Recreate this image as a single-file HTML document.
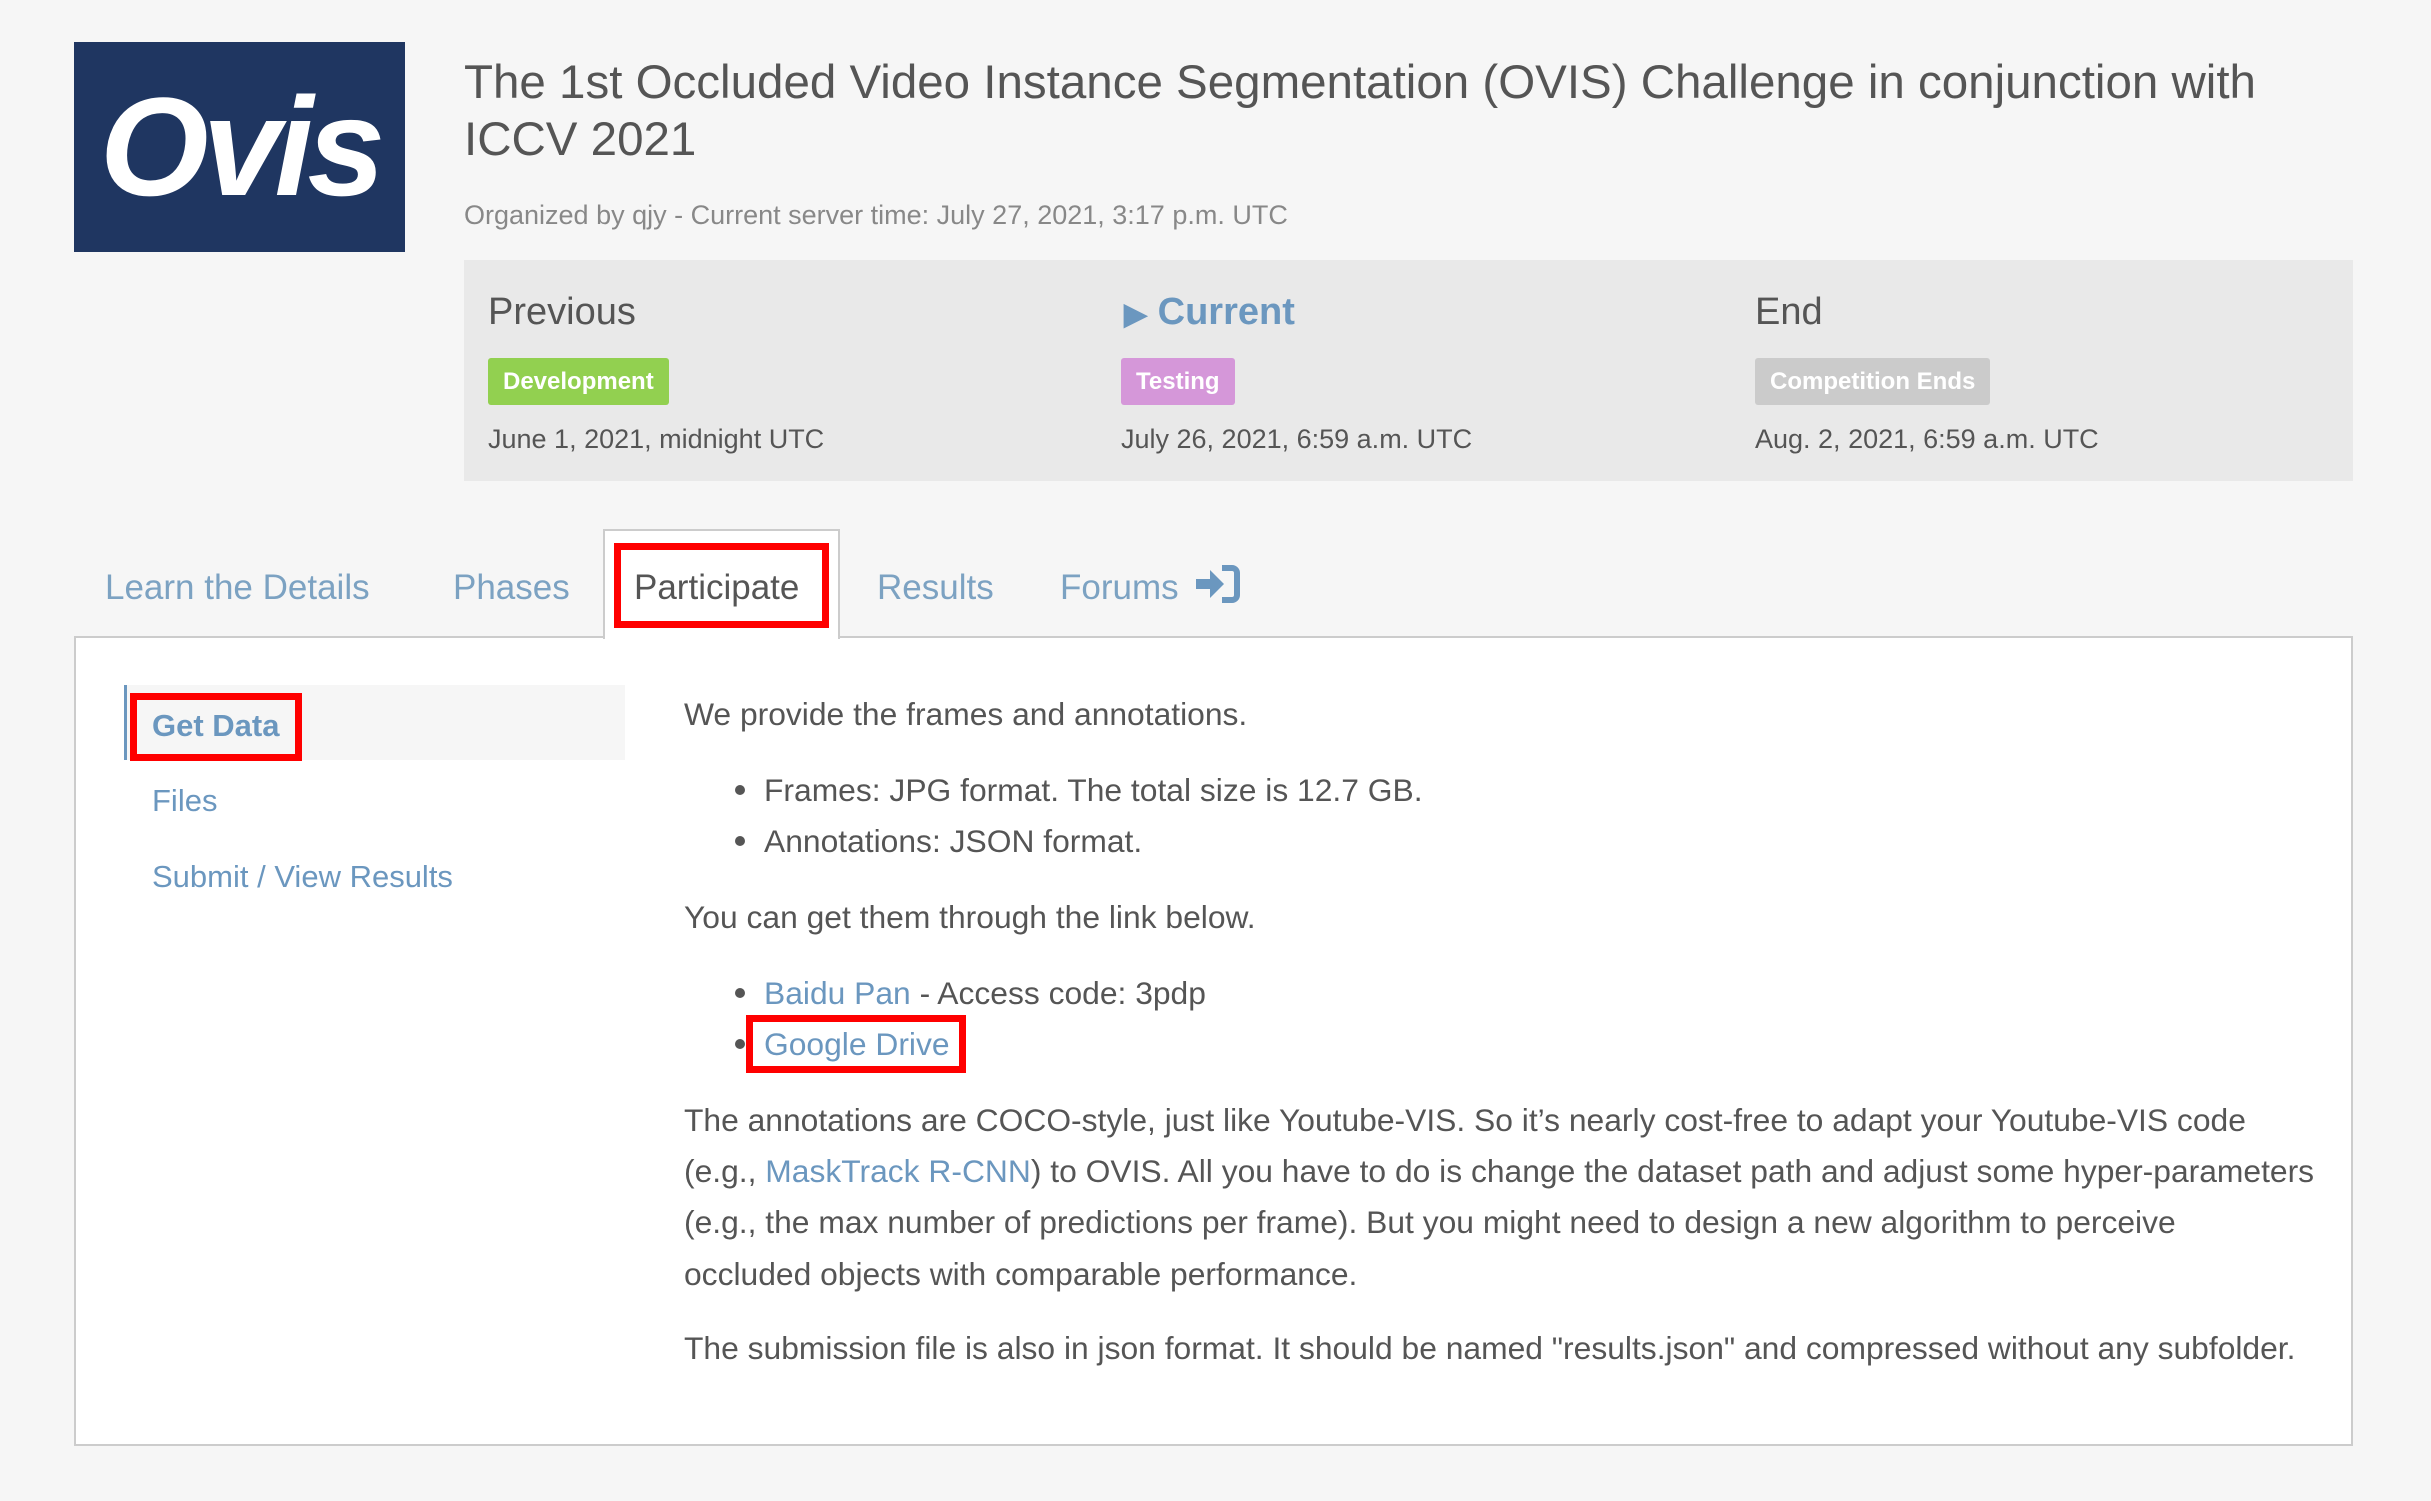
<!DOCTYPE html>
<html><head><meta charset="utf-8"><style>
*{margin:0;padding:0;box-sizing:border-box}
body{width:2431px;height:1501px;background:#f6f6f6;font-family:"Liberation Sans",sans-serif;position:relative;overflow:hidden;color:#555}
.a{position:absolute;white-space:nowrap}
.logo{left:74px;top:42px;width:331px;height:210px;background:#1f3661;color:#fff;font-style:italic;font-weight:bold;font-size:140px;line-height:210px;text-align:center;letter-spacing:-6px}
.title{left:464px;top:54px;font-size:47.5px;line-height:57px;color:#555}
.org{left:464px;top:200px;font-size:27px;color:#888}
.phase{left:464px;top:260px;width:1889px;height:221px;background:#e9e9e9}
.h{font-size:38px;color:#555;top:288px;line-height:48px}
.badge{top:358px;height:47px;line-height:47px;color:#fff;font-size:24px;font-weight:bold;padding:0 15px;border-radius:3px}
.date{top:423px;font-size:27px;color:#555;line-height:32px}
.tab{top:563px;font-size:35px;line-height:50px;color:#7ca2c2}
.panel{left:74px;top:636px;width:2279px;height:810px;background:#fff;border:2px solid #ccc}
.act{left:603px;top:529px;width:237px;height:110px;background:#fff;border:2px solid #ccc;border-bottom:none}
.red{border:7px solid #f00}
.side{font-size:31px;color:#6b97bf;line-height:40px}
.t{font-size:31.8px;line-height:40px;color:#555;left:684px}
.l{color:#6b97bf}
.dot{width:10px;height:10px;border-radius:5px;background:#555;left:735px}
</style></head><body>
<div class="a logo">Ovis</div>
<div class="a title">The 1st Occluded Video Instance Segmentation (OVIS) Challenge in conjunction with<br>ICCV 2021</div>
<div class="a org">Organized by qjy - Current server time: July 27, 2021, 3:17 p.m. UTC</div>
<div class="a phase"></div>
<div class="a h" style="left:488px">Previous</div>
<div class="a h" style="left:1124px;color:#6b97bf;font-weight:bold"><span style="font-size:30px">&#9654;</span> Current</div>
<div class="a h" style="left:1755px">End</div>
<div class="a badge" style="left:488px;background:#92d050">Development</div>
<div class="a badge" style="left:1121px;background:#d597d9">Testing</div>
<div class="a badge" style="left:1755px;background:#cbcbcb">Competition Ends</div>
<div class="a date" style="left:488px">June 1, 2021, midnight UTC</div>
<div class="a date" style="left:1121px">July 26, 2021, 6:59 a.m. UTC</div>
<div class="a date" style="left:1755px">Aug. 2, 2021, 6:59 a.m. UTC</div>
<div class="a panel"></div>
<div class="a act"></div>
<div class="a tab" style="left:105px">Learn the Details</div>
<div class="a tab" style="left:453px">Phases</div>
<div class="a tab" style="left:634px;color:#555">Participate</div>
<div class="a tab" style="left:877px">Results</div>
<div class="a tab" style="left:1060px">Forums</div>
<svg class="a" style="left:1194px;top:564px" width="46" height="40" viewBox="0 0 46 40"><path d="M2 15h14V6l14 14-14 14v-9H2z" fill="#6b97bf"/><path d="M28 4h10a5 5 0 0 1 5 5v22a5 5 0 0 1-5 5H28" fill="none" stroke="#6b97bf" stroke-width="6"/></svg>
<div class="a red" style="left:614px;top:543px;width:215px;height:85px"></div>
<div class="a" style="left:124px;top:685px;width:501px;height:75px;background:#f6f6f6;border-left:3px solid #6b97bf"></div>
<div class="a side" style="left:152px;top:706px;font-weight:bold">Get Data</div>
<div class="a side" style="left:152px;top:781px">Files</div>
<div class="a side" style="left:152px;top:857px">Submit / View Results</div>
<div class="a red" style="left:130px;top:693px;width:172px;height:68px"></div>
<div class="a t" style="top:694px">We provide the frames and annotations.</div>
<div class="a dot" style="top:785px"></div><div class="a t" style="left:764px;top:770px">Frames: JPG format. The total size is 12.7 GB.</div>
<div class="a dot" style="top:836px"></div><div class="a t" style="left:764px;top:821px">Annotations: JSON format.</div>
<div class="a t" style="top:897px">You can get them through the link below.</div>
<div class="a dot" style="top:988px"></div><div class="a t" style="left:764px;top:973px"><span class="l">Baidu Pan</span> - Access code: 3pdp</div>
<div class="a dot" style="top:1039px"></div><div class="a t" style="left:764px;top:1024px"><span class="l">Google Drive</span></div>
<div class="a red" style="left:746px;top:1015px;width:220px;height:58px"></div>
<div class="a t" style="top:1100px">The annotations are COCO-style, just like Youtube-VIS. So it’s nearly cost-free to adapt your Youtube-VIS code</div>
<div class="a t" style="top:1151px">(e.g., <span class="l">MaskTrack R-CNN</span>) to OVIS. All you have to do is change the dataset path and adjust some hyper-parameters</div>
<div class="a t" style="top:1202px">(e.g., the max number of predictions per frame). But you might need to design a new algorithm to perceive</div>
<div class="a t" style="top:1254px">occluded objects with comparable performance.</div>
<div class="a t" style="top:1328px">The submission file is also in json format. It should be named "results.json" and compressed without any subfolder.</div>
</body></html>
